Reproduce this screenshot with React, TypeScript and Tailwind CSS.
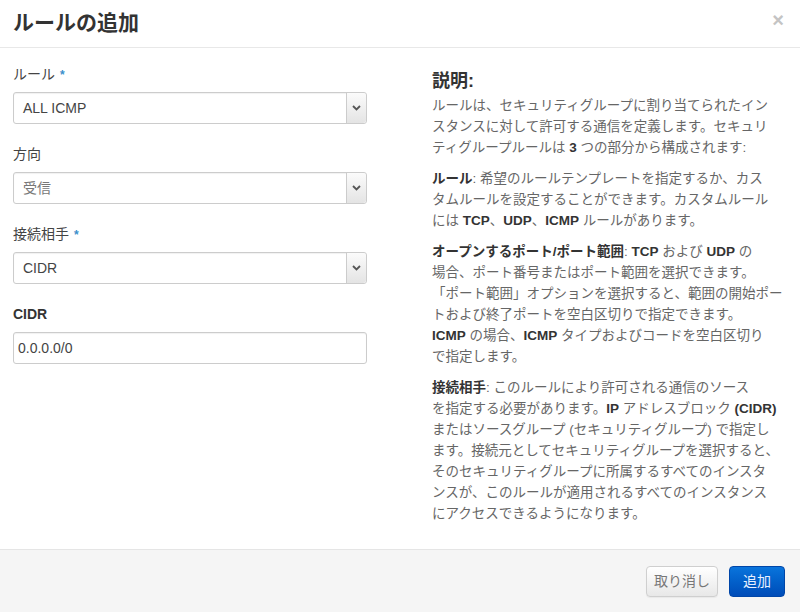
import React from "react";

const font = "font-['Liberation_Sans','Noto_Sans_CJK_JP',sans-serif]";

function Chevron() {
  return (
    <svg width="9" height="6" viewBox="0 0 9 6" className="block">
      <path d="M1 1 L4.5 4.5 L8 1" fill="none" stroke="#555" strokeWidth="1.8" />
    </svg>
  );
}

function SelectBox({ value, muted }: { value: string; muted?: boolean }) {
  return (
    <div className="flex h-[32px] w-full rounded-[3px] border border-[#cccccc] bg-white shadow-[inset_0_1px_1px_rgba(0,0,0,0.06)]">
      <div className={`flex flex-1 items-center pl-[9px] text-[14px] ${muted ? "text-[#777]" : "text-[#444]"}`}>
        {value}
      </div>
      <div className="flex w-[20px] items-center justify-center rounded-r-[3px] border-l border-[#cccccc] bg-gradient-to-b from-[#fbfbfb] to-[#e4e4e4]">
        <Chevron />
      </div>
    </div>
  );
}

function Label({ text, required, bold }: { text: string; required?: boolean; bold?: boolean }) {
  return (
    <div className={`mb-[8px] h-[20px] text-[14px] leading-[20px] ${bold ? "font-bold text-[#333]" : "text-[#444]"}`}>
      {text}
      {required && <span className="ml-[5px] text-[12px] font-bold text-[#3a8fcb]">*</span>}
    </div>
  );
}

const B = ({ children }: { children: React.ReactNode }) => (
  <strong className="font-bold text-[#333]">{children}</strong>
);

export default function App() {
  return (
    <div className={`${font} flex h-[612px] w-[800px] flex-col bg-white`}>
      {/* header */}
      <div className="flex h-[48px] shrink-0 items-center justify-between border-b border-[#e8e8e8] pl-[13px] pr-[16px]">
        <div className="pb-[1px] text-[21px] font-bold leading-[24px] text-[#333]">ルールの追加</div>
        <div className="pb-[8px] text-[20px] font-bold leading-[20px] text-[#c4c4c4]">×</div>
      </div>

      {/* body */}
      <div className="flex flex-1">
        <div className="box-content w-[354px] pl-[13px] pt-[16px]">
          <div className="mb-[20px]">
            <Label text="ルール" required />
            <SelectBox value="ALL ICMP" />
          </div>
          <div className="mb-[20px]">
            <Label text="方向" />
            <SelectBox value="受信" muted />
          </div>
          <div className="mb-[20px]">
            <Label text="接続相手" required />
            <SelectBox value="CIDR" />
          </div>
          <div>
            <Label text="CIDR" bold />
            <div className="flex h-[32px] w-full items-center rounded-[3px] border border-[#cccccc] bg-white pl-[4px] text-[14px] text-[#444] shadow-[inset_0_1px_1px_rgba(0,0,0,0.06)]">
              0.0.0.0/0
            </div>
          </div>
        </div>

        <div className="ml-[65px] w-[353px] whitespace-nowrap pt-[22px] text-[13.5px] leading-[21px] text-[#666]">
          <div className="mb-[3px] text-[18px] font-bold leading-[22px] text-[#333]">説明:</div>
          <p className="mb-[10px]">
            ルールは、セキュリティグループに割り当てられたイン<br />
            スタンスに対して許可する通信を定義します。セキュリ<br />
            ティグループルールは <B>3</B> つの部分から構成されます:
          </p>
          <p className="mb-[10px]">
            <B>ルール</B>: 希望のルールテンプレートを指定するか、カス<br />
            タムルールを設定することができます。カスタムルール<br />
            には <B>TCP</B>、<B>UDP</B>、<B>ICMP</B> ルールがあります。
          </p>
          <p className="mb-[10px]">
            <B>オープンするポート/ポート範囲</B>: <B>TCP</B> および <B>UDP</B> の<br />
            場合、ポート番号またはポート範囲を選択できます。<br />
            「ポート範囲」オプションを選択すると、範囲の開始ポー<br />
            トおよび終了ポートを空白区切りで指定できます。<br />
            <B>ICMP</B> の場合、<B>ICMP</B> タイプおよびコードを空白区切り<br />
            で指定します。
          </p>
          <p>
            <B>接続相手</B>: このルールにより許可される通信のソース<br />
            を指定する必要があります。<B>IP</B> アドレスブロック <B>(CIDR)</B><br />
            またはソースグループ (セキュリティグループ) で指定し<br />
            ます。接続元としてセキュリティグループを選択すると、<br />
            そのセキュリティグループに所属するすべてのインスタ<br />
            ンスが、このルールが適用されるすべてのインスタンス<br />
            にアクセスできるようになります。
          </p>
        </div>
      </div>

      {/* footer */}
      <div className="flex h-[63px] shrink-0 items-center justify-end gap-[11px] border-t border-[#e5e5e5] bg-[#f5f5f5] pr-[15px]">
        <button className="h-[31px] w-[72px] rounded-[4px] border border-[#cfcfcf] bg-gradient-to-b from-white to-[#e8e8e8] text-[14px] text-[#777] shadow-[0_1px_1px_rgba(0,0,0,0.05)]">
          取り消し
        </button>
        <button className="h-[31px] w-[56px] rounded-[4px] border border-[#0046a8] bg-gradient-to-b from-[#0a74dc] to-[#004cb8] text-[14px] text-[#e8f0ff]">
          追加
        </button>
      </div>
    </div>
  );
}
